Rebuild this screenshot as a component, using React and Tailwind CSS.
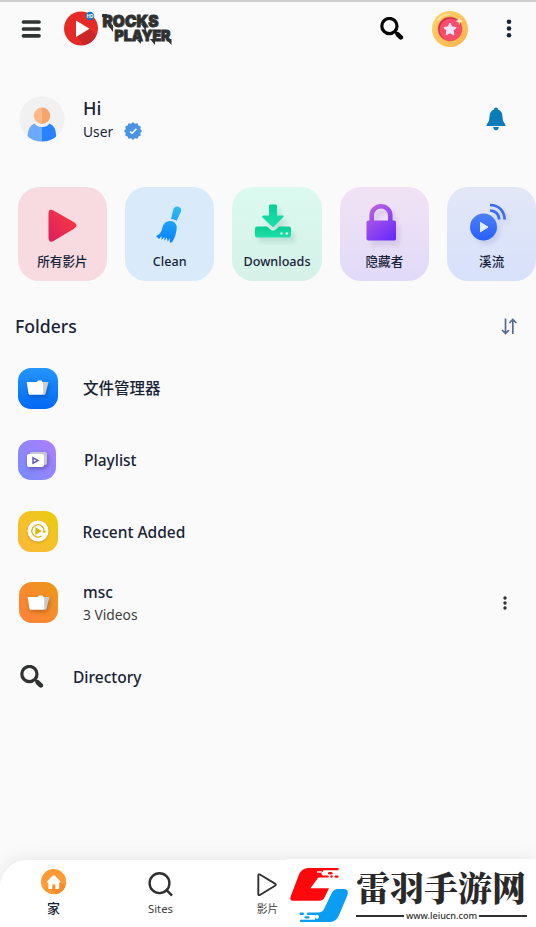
const Gradient = ({ id, from, to, x1 = 0, y1 = 0, x2 = 0, y2 = 1 }) => (
  <linearGradient id={id} x1={x1} y1={y1} x2={x2} y2={y2}>
    <stop offset="0" stopColor={from} />
    <stop offset="1" stopColor={to} />
  </linearGradient>
);

const BrandLogo = () => (
  <svg width="110" height="40" viewBox="0 0 110 40" className="overflow-visible">
    <circle cx="17" cy="19.5" r="17" fill="#e52b27" />
    <path d="M13 28 L26 20 L32 27 A17 17 0 0 1 20 36 Z" fill="#c92727" />
    <path d="M12 11.5 V28 L25.500 19.800 Z" fill="#fff" />
    <circle cx="26" cy="7" r="4.200" fill="#1479b8" />
    <text x="26" y="8.800" fontSize="4.600" fontWeight="700" fill="#fff" textAnchor="middle">HD</text>
    <g fill="#2f3131" stroke="#2f3131" strokeWidth="0.900" fontWeight="900" fontFamily="Inter, sans-serif">
      <text x="38.500" y="17.800" fontSize="16.500" textLength="56" lengthAdjust="spacingAndGlyphs">ROCKS</text>
      <text x="50.500" y="32" fontSize="14" textLength="56" lengthAdjust="spacingAndGlyphs">PLAYER</text>
    </g>
    <path d="M44 16 H49 V23 Z M38 5 H43 V8 H38 Z M77 15 H82 V22 Z M73 31 H77 V35 Z M86 30 H91 V36 Z M102 30 H107.500 V36 Z" fill="#2f3131" />
  </svg>
);

const MenuIcon = () => (
  <svg width="20" height="18" viewBox="0 0 20 18">
    <path d="M2.500 2 H18 M2.500 9 H18 M2.500 15.800 H18" stroke="#303333" strokeWidth="3.700" strokeLinecap="round" />
  </svg>
);

const SearchIcon = ({ color }) => (
  <svg width="24" height="24" viewBox="0 0 24 24" fill="none" stroke={color}>
    <circle cx="9.400" cy="9" r="7.600" strokeWidth="3.200" />
    <path d="M15 14.600 L18 17.600" strokeWidth="2.400" />
    <path d="M17.700 17.300 L20.800 20.400" strokeWidth="4.600" strokeLinecap="round" />
  </svg>
);

const CoinIcon = () => (
  <svg width="36" height="36" viewBox="0 0 36 36">
    <defs>
      <Gradient id="coin" from="#ffd36c" to="#fbb34b" x2={1} />
    </defs>
    <circle cx="18" cy="18" r="18" fill="url(#coin)" />
    <path d="M6 9 A15 15 0 0 1 17 3.200" fill="none" stroke="#ffe5a2" strokeWidth="1.500" strokeLinecap="round" />
    <circle cx="18" cy="18" r="12.500" fill="#ee9245" />
    <circle cx="18" cy="18" r="11.800" fill="#c92d4d" />
    <circle cx="18.600" cy="18.800" r="11" fill="#fa4d6d" />
    <path d="M18 12 L19.900 15.900 L24.200 16.500 L21.100 19.500 L21.800 23.800 L18 21.800 L14.200 23.800 L14.900 19.500 L11.800 16.500 L16.100 15.900 Z" fill="#eee7ff" stroke="#eee7ff" strokeLinejoin="round" />
    <path d="M27.200 6 L28 9 L31 10 L28 11 L27.200 14 L26.300 11 L23.400 10 L26.300 9 Z" fill="#fff1dc" />
  </svg>
);

const DotsIcon = ({ small = false }) =>
  small ? (
    <svg width="6" height="14" viewBox="0 0 6 14" fill="#303333">
      <circle cx="3" cy="2" r="1.700" />
      <circle cx="3" cy="7" r="1.700" />
      <circle cx="3" cy="12" r="1.700" />
    </svg>
  ) : (
    <svg width="6" height="20" viewBox="0 0 6 20" fill="#172438">
      <circle cx="3" cy="2.800" r="2.300" />
      <circle cx="3" cy="9.500" r="2.300" />
      <circle cx="3" cy="16.200" r="2.300" />
    </svg>
  );

const Avatar = () => (
  <svg width="46" height="46" viewBox="0 0 46 46">
    <defs>
      <clipPath id="avatarClip">
        <circle cx="23" cy="23" r="22.600" />
      </clipPath>
    </defs>
    <circle cx="23" cy="23" r="22.600" fill="#f1f1f1" />
    <g clipPath="url(#avatarClip)">
      <path d="M15.500 27.500 Q18 31 23 31 V46 H13 Q9 44 8.500 40 Q9 30 15.500 27.500" fill="#6ca9ff" />
      <path d="M30.500 27.500 Q28 31 23 31 V46 H33 Q37 44 37.200 40 Q37 30 30.500 27.500" fill="#2783ff" />
    </g>
    <path d="M23 11.500 A8.200 8.200 0 0 0 23 28 Z" fill="#fdb98a" />
    <path d="M23 11.500 A8.200 8.200 0 0 1 23 28 Z" fill="#f5a66c" />
  </svg>
);

const VerifiedIcon = () => (
  <svg width="18" height="18" viewBox="0 0 18 18">
    <path
      d="M9 0 L10.900 1.700 L13.500 1.200 L14.300 3.600 L16.800 4.500 L16.300 7.100 L18 9 L16.300 10.900 L16.800 13.500 L14.400 14.400 L13.500 16.800 L10.900 16.300 L9 18 L7.100 16.300 L4.500 16.800 L3.600 14.400 L1.200 13.500 L1.700 10.900 L0 9 L1.700 7.100 L1.200 4.500 L3.600 3.600 L4.500 1.200 L7.100 1.700 Z"
      fill="#4b93e3"
    />
    <path d="M6 9.500 L8.100 11.200 L12.400 6.800" fill="none" stroke="#fff" strokeWidth="1.600" />
  </svg>
);

const BellIcon = () => (
  <svg width="20" height="24" viewBox="0 0 20 24" fill="#087bb9">
    <path d="M8 2.500 A2 2 0 0 1 12 2.500 Q16.500 4 16.500 10 Q16.500 14 18.700 16.500 Q20.500 19 18.500 19 H1.500 Q-.5 19 1.300 16.500 Q3.500 14 3.500 10 Q3.500 4 8 2.500" />
    <path d="M7.200 20.100 H12.800 Q12.300 23.400 10 23.400 Q7.700 23.400 7.200 20.100" />
  </svg>
);

const PlayTileIcon = () => (
  <svg width="30" height="34" viewBox="0 0 30 34" className="overflow-visible">
    <defs>
      <Gradient id="play" from="#ff3b3e" to="#d91f60" x1={1} y2={1} x2={0} />
    </defs>
    <path d="M1.500 5.500 Q1.500 0 6.500 2.500 L27 14.300 Q32 17.500 27 20.700 L6.500 33 Q1.500 35.300 1.500 29.500 Z" fill="url(#play)" />
  </svg>
);

const BroomIcon = () => (
  <svg width="27" height="37" viewBox="0 0 27 37">
    <defs>
      <linearGradient id="broom" gradientUnits="userSpaceOnUse" x1="20" y1="0" x2="14" y2="36">
        <stop offset="0" stopColor="#31bdf0" />
        <stop offset="1" stopColor="#0882ff" />
      </linearGradient>
    </defs>
    <g fill="url(#broom)">
      <path d="M17.500 2.700 Q19 0 22.500 .8 Q26 2 25 5.500 L20.700 14.700 Q18 13.300 15 13 Z" />
      <path d="M12 15.200 Q19 14 20.700 20.500 Q21 28 16.500 35.500 Q15.500 37 14 36.500 L13.500 32 L11.800 36 L10.800 31.500 L8.500 34.800 L8.300 31 L5.500 34 L5.500 30 L3 33 L0 30 Q5 28 6 23 Q7 16.500 12 15.200 Z" />
    </g>
  </svg>
);

const DownloadIcon = () => (
  <svg width="36" height="34" viewBox="0 0 36 34" className="overflow-visible drop-shadow-[4px_5px_2px_rgba(50,120,100,0.15)]">
    <defs>
      <Gradient id="download" from="#08ce94" to="#1ee0a8" />
    </defs>
    <g fill="url(#download)">
      <path d="M15.200 .5 H20.800 Q22 .5 22 2 V11.500 H28 Q29.500 12 28 13.500 L19 22.500 Q18 23.500 17 22.500 L7.500 13.500 Q6.300 12 8 11.500 H14 V2 Q14 .5 15.200 .5" />
      <path d="M2 22.500 H12 L16 26 Q18 27.500 20 26 L24 22.500 H34 Q36 22.500 36 24.500 V31.500 Q36 33.500 34 33.500 H2 Q0 33.500 0 31.500 V24.500 Q0 22.500 2 22.500" />
    </g>
    <g fill="#ddfff2">
      <circle cx="26.500" cy="29.500" r="1.300" />
      <circle cx="31.800" cy="29.500" r="1.300" />
    </g>
  </svg>
);

const LockIcon = () => (
  <svg width="30" height="37" viewBox="0 0 30 37" className="overflow-visible drop-shadow-[4px_5px_2px_rgba(90,60,140,0.13)]">
    <defs>
      <linearGradient id="lock" gradientUnits="userSpaceOnUse" x1="5" y1="5" x2="29" y2="35">
        <stop offset="0" stopColor="#b65ee3" />
        <stop offset="1" stopColor="#6529fa" />
      </linearGradient>
    </defs>
    <path d="M5.700 20 V11.500 A9.300 9.300 0 0 1 24.300 11.500 V20" fill="none" stroke="url(#lock)" strokeWidth="4.600" />
    <rect x=".5" y="16.500" width="29.500" height="20" rx="1.700" fill="url(#lock)" />
  </svg>
);

const StreamIcon = () => (
  <svg width="37" height="38" viewBox="0 0 37 38" className="overflow-visible drop-shadow-[3px_4px_2px_rgba(60,80,140,0.13)]">
    <defs>
      <Gradient id="stream" from="#4d80f4" to="#285fff" />
    </defs>
    <circle cx="13.500" cy="24" r="13.500" fill="url(#stream)" />
    <path d="M10.500 19.500 V28.800 L18 24.100 Z" fill="#e5edff" stroke="#e5edff" strokeLinejoin="round" />
    <path d="M20 2 Q33.500 2.500 34.700 16.500 M20 7.500 Q28.500 8 29.300 16.500" fill="none" stroke="#3b6df4" strokeWidth="2.700" />
  </svg>
);

const SortIcon = () => (
  <svg width="17" height="17" viewBox="0 0 17 17" fill="none" stroke="#536b91" strokeWidth="1.700">
    <path d="M4.500 .5 V15.500 M1 12 L4.500 15.500 L8 12" />
    <path d="M11.800 16 V1.500 M8.300 5 L11.800 1.500 L15.400 5" />
  </svg>
);

const FolderGlyph = () => (
  <svg width="22" height="16" viewBox="0 0 22 16" className="overflow-visible drop-shadow-[1px_2px_2px_rgba(0,0,0,0.25)]">
    <path d="M15 2 H21.500 L18.500 13.800 Q18 15 16 15 Z" fill="#c9cdd2" />
    <path d="M.2 2 H9.500 L11 .5 H14.500 L16.200 3 V13.500 Q16.200 14.800 14.500 14.800 H3 Q1.800 14.800 1.500 13.500 L-.3 2.800 Q-.3 2 .2 2" fill="#fff" />
  </svg>
);

const PlaylistGlyph = () => (
  <svg width="20" height="16" viewBox="0 0 20 16" className="overflow-visible drop-shadow-[1px_2px_2px_rgba(0,0,0,0.3)]">
    <rect x="3" y="0" width="17" height="13" rx="2" fill="#c9c7cf" />
    <rect x="0" y="2" width="17" height="13" rx="2" fill="#fff" />
    <path d="M6 5.800 V11.200 L11 8.500 Z" fill="none" stroke="#655bbd" strokeWidth="1.500" />
  </svg>
);

const RecentGlyph = () => (
  <svg width="22" height="22" viewBox="0 0 22 22" className="drop-shadow-[0_1px_1px_rgba(0,0,0,0.2)]">
    <circle cx="11" cy="11" r="10.500" fill="#fff" />
    <path d="M14.500 16 A6.200 6.200 0 1 1 17.200 11" fill="none" stroke="#ddb312" strokeWidth="1.300" />
    <path d="M15.200 11 H19.200 L17.200 13.300 Z M8.300 7 V15 L14.800 11 Z" fill="#ddb312" />
  </svg>
);

const HomeIcon = () => (
  <svg width="26" height="26" viewBox="0 0 26 26">
    <circle cx="12.600" cy="12.700" r="12.600" fill="#ff9933" />
    <path d="M19 13 L24.500 17 Q22 24 15 25 L9 19 Z" fill="#f48c2d" />
    <path d="M6 12.500 L11.700 6.600 Q12.700 5.800 13.700 6.600 L19.500 12.500 Q20 13.500 19 13.500 H18.200 V19 Q18.200 20 17.200 20 H14.300 V15.500 H11.300 V20 H8.300 Q7.300 20 7.300 19 V13.500 H6.300 Q5.300 13.400 6 12.500" fill="#fff" />
  </svg>
);

const SitesIcon = () => (
  <svg width="26" height="26" viewBox="0 0 26 26" fill="none" stroke="#303030" strokeWidth="2.400">
    <circle cx="11.500" cy="11.200" r="9.900" />
    <path d="M18.500 18.200 L24 23.700" />
  </svg>
);

const VideosIcon = () => (
  <svg width="21" height="24" viewBox="0 0 21 24" fill="none" stroke="#303030" strokeWidth="1.900" strokeLinejoin="round">
    <path d="M1.300 2.800 Q1.300 .6 3.300 1.700 L18 10.600 Q19.500 11.700 18 12.700 L3.300 21.700 Q1.300 23 1.300 20.700 Z" />
  </svg>
);

const SiteMark = () => (
  <svg width="59" height="55" viewBox="0 0 59 55">
    <g fill="#ff080d">
      <path d="M18 0 H48.500 V2.300 H33 V7.500 H38 Q40 8.500 38 9.600 H29 Q28 9.600 27.200 11 L20.500 20.300 H39 L34.500 29.500 Q33 32.800 29 32.800 H2 Q-.8 32 1 27.500 L9 6.500 Q12 0 18 0" />
      <rect x="38" y="4" width="4.500" height="2.400" rx="1.200" />
      <circle cx="41.500" cy="8.500" r="1.200" />
      <rect x="44.500" y="7.400" width="4" height="2.400" rx="1.200" />
      <circle cx="33.500" cy="5.500" r="2" fill="#fff" />
    </g>
    <path d="M27 4 H32" stroke="#fff" strokeWidth="1.300" />
    <g fill="#0a9df4">
      <path d="M48 21 H54 Q59 21 57.500 27 L49.500 46 Q46.500 54 40 54 H10 V51.700 H25 V47 H18 Q15 46 18 44.400 H29 Q33 44.400 34.500 40 L41.500 25.500 Q43.500 21 48 21" />
      <rect x="9.500" y="44.400" width="4.500" height="2.500" rx="1.200" />
      <rect x="14.500" y="48.200" width="5" height="2.300" rx="1.100" />
      <circle cx="27" cy="48.800" r="2" fill="#fff" />
    </g>
  </svg>
);

const shortcuts = [
  { label: "所有影片", icon: <PlayTileIcon />, bg: "bg-[#f7dbe0]", pad: "pt-[21px]" },
  { label: "Clean", icon: <BroomIcon />, bg: "bg-[#d9ebfa]", pad: "pt-[19px]" },
  { label: "Downloads", icon: <DownloadIcon />, bg: "bg-linear-to-b from-[#dbfaef] to-[#d5f1e8]", pad: "pt-[17px] pr-2" },
  { label: "隐藏者", icon: <LockIcon />, bg: "bg-linear-to-b from-[#f1e3f4] to-[#e1daf9]", pad: "pt-[17px] pr-[7px]" },
  { label: "溪流", icon: <StreamIcon />, bg: "bg-linear-to-b from-[#e2e7f7] to-[#d8e1fb]", pad: "pt-[16px] pr-[6px]" },
];

const ShortcutTile = ({ label, icon, bg, pad }) => (
  <div className={`flex h-[94px] w-[89.5px] shrink-0 flex-col items-center rounded-[21px] ${bg}`}>
    <div className={`h-[65px] ${pad}`}>{icon}</div>
    <span className="text-[12.6px] leading-5 font-medium whitespace-nowrap">{label}</span>
  </div>
);

const FolderRow = ({ title, subtitle, icon, bg, indent, height }) => (
  <div className={`flex items-center ${height}`}>
    <div className="w-10 shrink-0">
      <div className={`flex items-center justify-center rounded-[13px] ${bg}`}>{icon}</div>
    </div>
    <div className={indent}>
      <div className="text-[15.5px] leading-5 font-medium">{title}</div>
      {subtitle && <div className="mt-[3px] text-[13.8px] leading-5 text-[#414141]">{subtitle}</div>}
    </div>
    {subtitle && (
      <div className="mr-[28.5px] ml-auto">
        <DotsIcon small />
      </div>
    )}
  </div>
);

const App = () => {
  return (
    <div className="flex h-[927px] w-[536px] flex-col overflow-hidden border-t-2 border-[#cccccc] bg-[#fafafa] font-['Noto_Sans','Noto_Sans_CJK_SC',sans-serif] text-[#182337]">
      <header className="flex h-[53px] shrink-0 items-center pl-[21px]">
        <MenuIcon />
        <div className="ml-[23px]">
          <BrandLogo />
        </div>
        <div className="ml-auto flex items-center pr-6">
          <SearchIcon color="#050505" />
          <div className="mr-[38px] ml-[28px]">
            <CoinIcon />
          </div>
          <DotsIcon />
        </div>
      </header>

      <section className="mt-[39px] flex h-[50px] shrink-0 items-center pr-[30px] pl-[18.5px]">
        <Avatar />
        <div className="ml-[18.5px]">
          <div className="text-[18px] leading-6 font-medium">Hi</div>
          <div className="flex h-[22px] items-center gap-[11px] text-[13.8px]">
            <span className="pt-[2px]">User</span>
            <VerifiedIcon />
          </div>
        </div>
        <div className="ml-auto">
          <BellIcon />
        </div>
      </section>

      <section className="mt-[43px] flex shrink-0 gap-[17.8px] pl-[17.7px]">
        {shortcuts.map((item) => (
          <ShortcutTile key={item.label} {...item} />
        ))}
      </section>

      <div className="mt-[33px] flex h-6 shrink-0 items-center justify-between pr-[18px] pl-[15px]">
        <h2 className="pt-px text-[17.6px] font-medium">Folders</h2>
        <SortIcon />
      </div>

      <section className="mt-[14px] shrink-0 pl-[18px]">
        <FolderRow
          title="文件管理器"
          icon={<FolderGlyph />}
          bg="h-[41px] w-10 bg-linear-to-b from-[#2495fd] to-[#0568f5]"
          indent="ml-[25px]"
          height="h-[72px]"
        />
        <FolderRow
          title="Playlist"
          icon={<PlaylistGlyph />}
          bg="h-10 w-[38px] bg-linear-to-tr from-[#748cff] to-[#ad7dff]"
          indent="ml-[26px]"
          height="h-[71px]"
        />
        <FolderRow
          title="Recent Added"
          icon={<RecentGlyph />}
          bg="h-[41px] w-10 bg-linear-to-tr from-[#fdb738] to-[#e9cc00]"
          indent="ml-[24.5px] pt-px"
          height="h-[72px]"
        />
        <FolderRow
          title="msc"
          subtitle="3 Videos"
          icon={<FolderGlyph />}
          bg="ml-px h-[41px] w-[39px] bg-linear-to-tr from-[#ff803a] to-[#ec9710]"
          indent="ml-[25px] pt-[2px]"
          height="h-[71px]"
        />
        <div className="mt-[15px] flex h-12 items-center pl-[2px]">
          <SearchIcon color="#303131" />
          <span className="ml-[29px] pt-px text-[15.5px] font-medium">Directory</span>
        </div>
      </section>

      <nav className="mt-auto flex h-[67px] shrink-0 rounded-tl-[27px] bg-white shadow-[0_-3px_16px_rgba(0,0,0,0.07)]">
        <div className="flex w-[107px] flex-col items-center pt-[9px]">
          <HomeIcon />
          <span className="mt-[3px] text-[13px] leading-5 font-medium">家</span>
        </div>
        <div className="flex w-[107px] flex-col items-center pt-[12px] text-[#414141]">
          <SitesIcon />
          <span className="mt-px text-[11.3px] leading-5">Sites</span>
        </div>
        <div className="flex w-[73px] flex-col items-center pt-[13px] pl-[34px] text-[#414141]">
          <VideosIcon />
          <span className="mt-[2px] text-[10.8px] leading-5 whitespace-nowrap">影片</span>
        </div>
        <div className="-mt-px flex h-[68px] w-[249px] items-start bg-white pt-[9px] pl-[3px]">
          <SiteMark />
          <div className="ml-[7px] flex w-[171px] flex-col">
            <div className="h-[39px] text-[34px] leading-[38px] font-black whitespace-nowrap text-[#292929] font-['Noto_Serif_CJK_SC','Noto_Sans_CJK_SC',serif]">
              雷羽手游网
            </div>
            <div className="mt-[2px] flex items-center gap-[2px] text-[9.1px] leading-[13px] font-medium text-[#303030]">
              <span className="h-[2px] flex-1 bg-[#303030]" />
              www.leiucn.com
              <span className="h-[2px] flex-1 bg-[#303030]" />
            </div>
          </div>
        </div>
      </nav>
    </div>
  );
};

export default App;
